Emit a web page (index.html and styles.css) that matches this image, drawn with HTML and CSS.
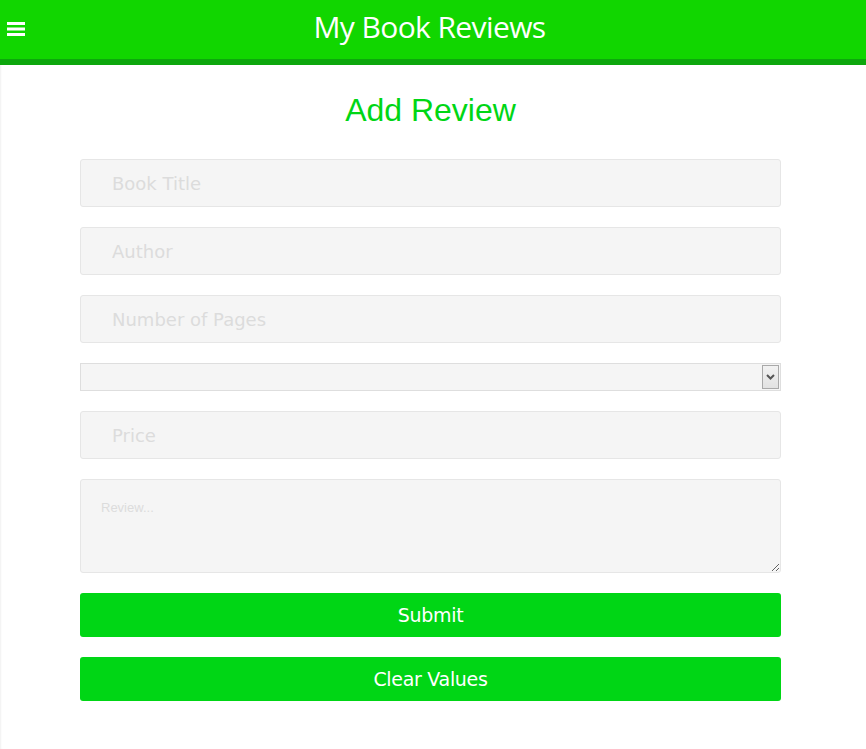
FILE: index.html
```html
<!DOCTYPE html>
<html lang="en">
<head>
<meta charset="utf-8">
<title>My Book Reviews</title>
<link rel="stylesheet" href="styles.css">
</head>
<body>
<header class="topbar">
  <button class="menu-btn" aria-label="Menu">
    <svg width="18" height="14" viewBox="0 0 18 14"><rect x="0" y="0" width="18" height="3" fill="#fff"/><rect x="0" y="5.5" width="18" height="3" fill="#fff"/><rect x="0" y="11" width="18" height="3" fill="#fff"/></svg>
  </button>
  <h1 class="site-title">My Book Reviews</h1>
</header>
<main class="page">
  <h2 class="page-title">Add Review</h2>
  <form class="review-form">
    <input class="field" type="text" placeholder="Book Title">
    <input class="field" type="text" placeholder="Author">
    <input class="field" type="text" placeholder="Number of Pages">
    <div class="select-box">
      <select class="select"><option></option></select>
      <span class="select-arrow"><svg width="9" height="6" viewBox="0 0 9 6"><path d="M1 1 L4.5 4.5 L8 1" fill="none" stroke="#555" stroke-width="2"/></svg></span>
    </div>
    <input class="field" type="text" placeholder="Price">
    <textarea class="area" placeholder="Review..."></textarea>
    <button type="button" class="btn">Submit</button>
    <button type="button" class="btn">Clear Values</button>
  </form>
</main>
</body>
</html>
```
FILE: styles.css
```css
html, body {
  margin: 0;
  padding: 0;
  background: #fff;
}
body {
  font-family: "DejaVu Sans", sans-serif;
  box-shadow: inset 2px 0 2px -1px rgba(0,0,0,0.06);
  min-height: 749px;
}
.topbar {
  height: 59px;
  background: #11d600;
  border-bottom: 6px solid #0da70d;
  display: flex;
  align-items: center;
  justify-content: center;
  position: relative;
}
.menu-btn {
  position: absolute;
  left: 7px;
  top: 22px;
  padding: 0;
  border: 0;
  background: none;
  line-height: 0;
}
.site-title {
  margin: 0;
  font-family: "Open Sans", sans-serif;
  font-weight: 400;
  font-size: 30px;
  color: #fff;
  letter-spacing: -0.6px;
  padding: 0 7px 6px 0;
}
.page {
  padding: 0 85px 0 80px;
}
.page-title {
  margin: 27px 0 30px;
  text-align: center;
  font-family: "Liberation Sans", Arial, sans-serif;
  font-weight: 400;
  font-size: 32px;
  line-height: 37px;
  color: #00d615;
}
.review-form {
  display: flex;
  flex-direction: column;
  gap: 20px;
}
.field {
  box-sizing: border-box;
  height: 48px;
  width: 100%;
  border: 1px solid #e6e6e6;
  border-radius: 3px;
  background-color: #f5f5f5;
  padding: 0 31px;
  font-family: "DejaVu Sans", sans-serif;
  font-size: 18px;
  color: #333;
  outline: none;
}
.field::placeholder {
  color: #dcdcdc;
}
.select-box {
  box-sizing: border-box;
  height: 28px;
  display: flex;
  align-items: stretch;
  border: 1px solid #dedede;
  background: #f5f5f5;
}
.select {
  flex: 1;
  appearance: none;
  border: 0;
  background: transparent;
  outline: none;
}
.select-arrow {
  width: 15px;
  margin: 1px 1px 1px 0;
  border: 1px solid #a9a9a9;
  background: linear-gradient(#f2f2f2, #e2e2e2);
  display: flex;
  align-items: center;
  justify-content: center;
}
.area {
  box-sizing: border-box;
  height: 94px;
  width: 100%;
  border: 1px solid #e6e6e6;
  border-radius: 3px;
  background-color: #f5f5f5;
  padding: 20px 20px;
  font-family: "Liberation Sans", Arial, sans-serif;
  font-size: 13px;
  outline: none;
  resize: vertical;
}
.area::placeholder {
  color: #dcdcdc;
}
.btn {
  height: 44px;
  border: 0;
  border-radius: 3px;
  background: #00d615;
  color: #fff;
  font-family: "DejaVu Sans", sans-serif;
  font-size: 19px;
  letter-spacing: -0.3px;
}
```
